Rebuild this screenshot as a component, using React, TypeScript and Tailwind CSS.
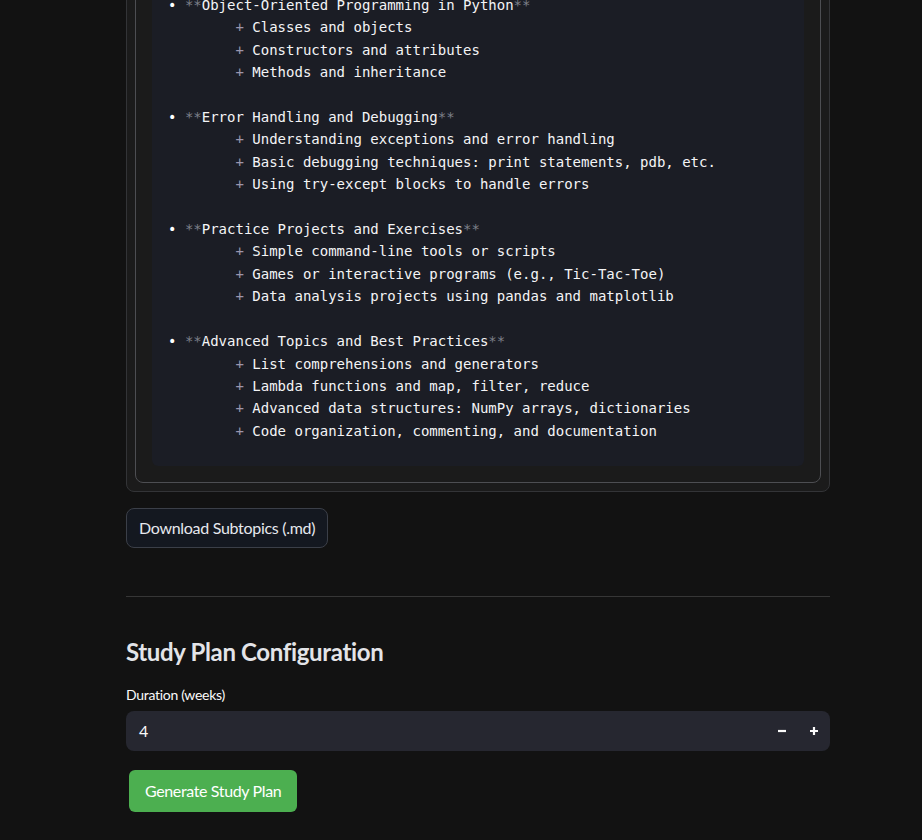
import React from 'react';

type Group = { title: string; items: string[] };

const groups: Group[] = [
  {
    title: 'Object-Oriented Programming in Python',
    items: ['Classes and objects', 'Constructors and attributes', 'Methods and inheritance'],
  },
  {
    title: 'Error Handling and Debugging',
    items: [
      'Understanding exceptions and error handling',
      'Basic debugging techniques: print statements, pdb, etc.',
      'Using try-except blocks to handle errors',
    ],
  },
  {
    title: 'Practice Projects and Exercises',
    items: [
      'Simple command-line tools or scripts',
      'Games or interactive programs (e.g., Tic-Tac-Toe)',
      'Data analysis projects using pandas and matplotlib',
    ],
  },
  {
    title: 'Advanced Topics and Best Practices',
    items: [
      'List comprehensions and generators',
      'Lambda functions and map, filter, reduce',
      'Advanced data structures: NumPy arrays, dictionaries',
      'Code organization, commenting, and documentation',
    ],
  },
];

const mono = "font-['DejaVu_Sans_Mono','Liberation_Mono',monospace]";
const sans = "font-['Lato','Noto_Sans',sans-serif]";

function CodeBlock() {
  return (
    <pre
      className={`${mono} rounded-md bg-[#1b1d25] px-4 pt-4 pb-6 text-[14px] leading-[22.4px] text-[#f4f4f6] whitespace-pre`}
    >
      {groups.map((g, gi) => (
        <React.Fragment key={g.title}>
          {gi > 0 && '\n'}
          <span className="text-white">•</span>{' '}
          <span className="text-[#7d808a]">**</span>
          {g.title}
          <span className="text-[#7d808a]">**</span>
          {'\n'}
          {g.items.map((item, ii) => (
            <React.Fragment key={item}>
              {'        '}
              <span className="text-[#9c96ad]">+</span> {item}
              {gi === groups.length - 1 && ii === g.items.length - 1 ? '' : '\n'}
            </React.Fragment>
          ))}
        </React.Fragment>
      ))}
    </pre>
  );
}

export default function App() {
  return (
    <div className={`${sans} min-h-[840px] overflow-hidden bg-[#121212]`}>
      <div className="ml-[126px] w-[704px] -mt-[48px] pb-7">
        <div className="rounded-lg border border-[#333437] bg-[#1b1b1b] p-2">
          <div className="rounded-lg border border-[#4d4e52] bg-[#1b1b1b] p-4">
            <CodeBlock />
          </div>
        </div>

        <button className="mt-[16px] h-[40px] rounded-lg border border-[#3b3f48] bg-[#141820] px-3 text-[16px] tracking-[-0.3px] text-[#e6e8ee]">
          Download Subtopics (.md)
        </button>

        <hr className="mt-[48px] border-t border-[#363636]" />

        <h2 className="mt-[40px] text-[24px] font-bold leading-[30px] tracking-[-0.35px] text-[#e3e4e8]">
          Study Plan Configuration
        </h2>

        <label className="mt-[18px] block text-[14px] leading-[20px] tracking-[-0.3px] text-[#fafafa]">
          Duration (weeks)
        </label>
        <div className="mt-[6px] flex h-[40px] items-center rounded-lg bg-[#262730]">
          <span className="flex-1 pl-[13px] text-[16px] text-[#fafafa]">4</span>
          <button className="flex h-full w-[32px] items-center justify-center">
            <svg width="10" height="10" viewBox="0 0 10 10">
              <path d="M1 5h8" stroke="#fafafa" strokeWidth="2.2" />
            </svg>
          </button>
          <button className="flex h-full w-[32px] items-center justify-center">
            <svg width="10" height="10" viewBox="0 0 10 10">
              <path d="M1 5h8M5 1v8" stroke="#fafafa" strokeWidth="2.2" />
            </svg>
          </button>
        </div>

        <button className="ml-[3px] mt-[19px] h-[42px] rounded-md bg-[#4caf50] px-4 text-[16px] tracking-[-0.37px] text-white">
          Generate Study Plan
        </button>
      </div>
    </div>
  );
}
